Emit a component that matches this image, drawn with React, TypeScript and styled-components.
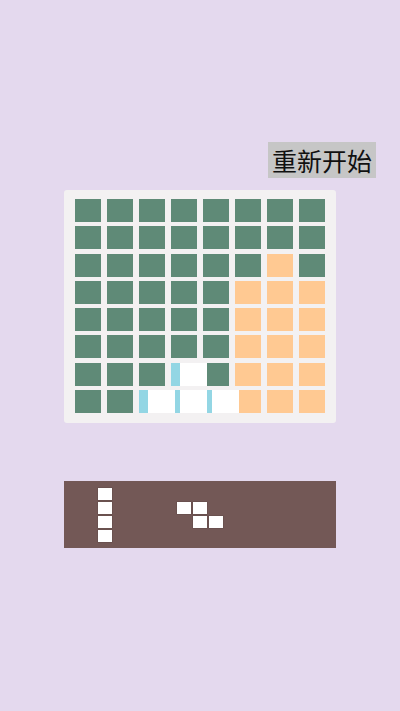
import styled, { createGlobalStyle } from "styled-components";

type CellKind = "filled" | "free" | "hint";

const G: CellKind = "filled";
const O: CellKind = "free";
const B: CellKind = "hint";

// board state, row by row from the top
const board: CellKind[][] = [
  [G, G, G, G, G, G, G, G],
  [G, G, G, G, G, G, G, G],
  [G, G, G, G, G, G, O, G],
  [G, G, G, G, G, O, O, O],
  [G, G, G, G, G, O, O, O],
  [G, G, G, G, G, O, O, O],
  [G, G, G, B, G, O, O, O],
  [G, G, B, B, B, O, O, O],
];

// piece being dragged over the board: [row, col], 1-based grid lines
const dragging: [number, number][] = [
  [7, 4],
  [8, 3],
  [8, 4],
  [8, 5],
];

const trayPieces: { cells: [number, number][]; shift: number }[] = [
  {
    cells: [
      [1, 1],
      [2, 1],
      [3, 1],
      [4, 1],
    ],
    shift: -4,
  },
  {
    cells: [
      [1, 1],
      [1, 2],
      [2, 2],
      [2, 3],
    ],
    shift: 0,
  },
];

const cellColors: Record<CellKind, string> = {
  filled: "#5f8a77",
  free: "#ffc992",
  hint: "#93d6e4",
};

export default function App() {
  return (
    <>
      <GlobalStyle />
      <Page>
        <TopBar>
          <RestartButton type="button">重新开始</RestartButton>
        </TopBar>

        <Board>
          {board.map((row, r) =>
            row.map((kind, c) => <Cell key={`${r}-${c}`} $kind={kind} />)
          )}
          <DragLayer>
            {dragging.map(([r, c]) => (
              <DragBlock key={`${r}-${c}`} $row={r} $col={c} />
            ))}
          </DragLayer>
        </Board>

        <Tray>
          {[0, 1, 2].map((slot) => {
            const piece = trayPieces[slot];
            return (
              <Slot key={slot}>
                {piece && (
                  <MiniPiece $shift={piece.shift}>
                    {piece.cells.map(([r, c]) => (
                      <MiniBlock key={`${r}-${c}`} $row={r} $col={c} />
                    ))}
                  </MiniPiece>
                )}
              </Slot>
            );
          })}
        </Tray>
      </Page>
    </>
  );
}

const GlobalStyle = createGlobalStyle`
  html, body {
    margin: 0;
    padding: 0;
    background: #e4d9ee;
  }
  body {
    font-family: "Noto Sans CJK SC", "Noto Sans", sans-serif;
  }
`;

const Page = styled.div`
  width: 400px;
  min-height: 711px;
  padding-top: 142px;
  box-sizing: border-box;
  display: flex;
  flex-direction: column;
  align-items: center;
  background: #e4d9ee;
`;

const TopBar = styled.div`
  align-self: stretch;
  display: flex;
  justify-content: flex-end;
  padding-right: 24px;
`;

const RestartButton = styled.button`
  height: 36px;
  padding: 0 4px;
  border: none;
  border-radius: 0;
  background: #c6c6c6;
  color: #111;
  font-family: "Noto Sans CJK SC", sans-serif;
  font-size: 25px;
  line-height: 36px;
  cursor: pointer;
`;

const Board = styled.div`
  position: relative;
  margin-top: 12px;
  width: 272px;
  box-sizing: border-box;
  padding: 9px 11px 10px;
  display: grid;
  grid-template-columns: repeat(8, 26px);
  grid-template-rows: repeat(8, 23px);
  column-gap: 6px;
  row-gap: 4.3px;
  background: #f3f1f2;
  border-radius: 3px;
`;

const Cell = styled.div<{ $kind: CellKind }>`
  background: ${(p) => cellColors[p.$kind]};
`;

const DragLayer = styled.div`
  position: absolute;
  left: 20px;
  top: 9px;
  display: grid;
  grid-template-columns: repeat(8, 26px);
  grid-template-rows: repeat(8, 23px);
  column-gap: 6px;
  row-gap: 4.3px;
  pointer-events: none;
`;

const DragBlock = styled.div<{ $row: number; $col: number }>`
  grid-row: ${(p) => p.$row};
  grid-column: ${(p) => p.$col};
  width: 27px;
  background: #ffffff;
`;

const Tray = styled.div`
  margin-top: 58px;
  width: 272px;
  height: 67px;
  display: grid;
  grid-template-columns: repeat(3, 1fr);
  align-items: center;
  justify-items: center;
  background: #735856;
`;

const Slot = styled.div`
  display: flex;
  align-items: center;
  justify-content: center;
`;

const MiniPiece = styled.div<{ $shift: number }>`
  display: grid;
  grid-auto-columns: 14px;
  grid-auto-rows: 12px;
  gap: 2px 2px;
  transform: translateX(${(p) => p.$shift}px);
`;

const MiniBlock = styled.div<{ $row: number; $col: number }>`
  grid-row: ${(p) => p.$row};
  grid-column: ${(p) => p.$col};
  background: #ffffff;
  box-shadow: 0 0 0 0.5px rgba(80, 60, 60, 0.5);
`;
